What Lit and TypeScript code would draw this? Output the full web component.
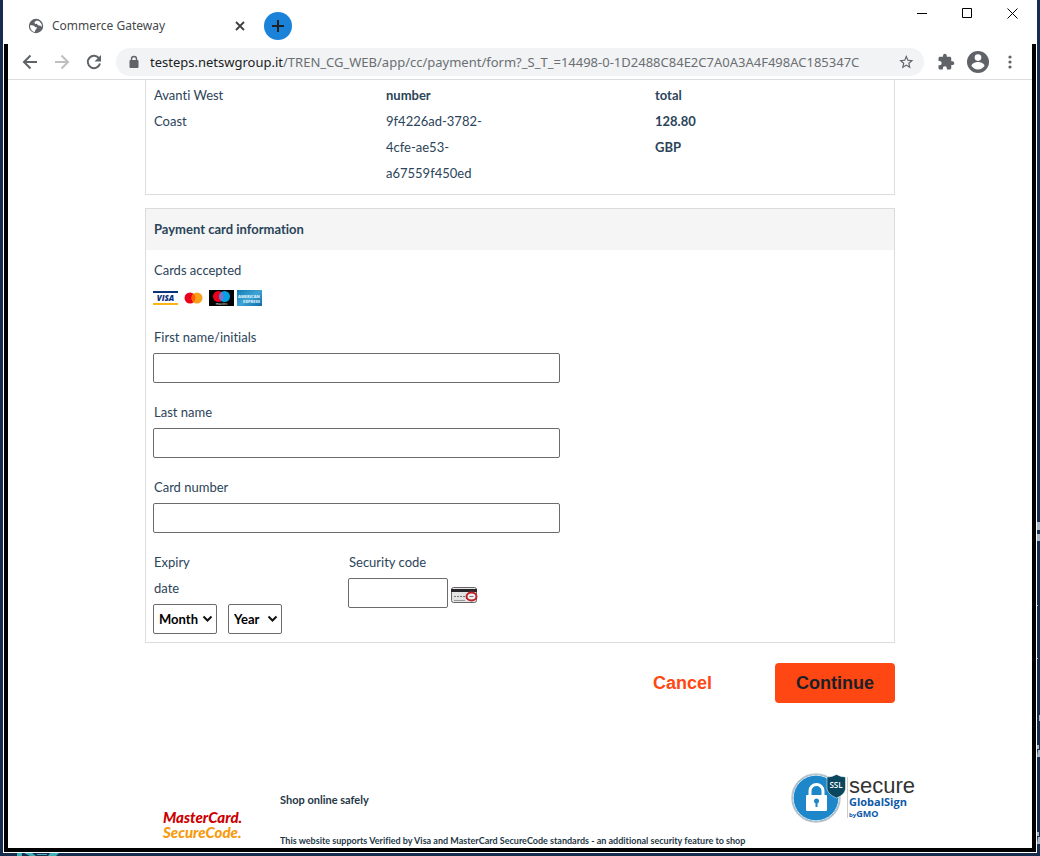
import { LitElement, html, css, svg } from "lit";
import { customElement } from "lit/decorators.js";

@customElement("browser-bar")
class BrowserBar extends LitElement {
  static styles = css`
    :host { display: block; }
    button { border: 0; background: none; padding: 0; display: grid; place-items: center; color: #5f6368; }
    svg { display: block; }
    .bar { display: flex; align-items: center; height: 35px; padding: 0 12px 0 14px; border-bottom: 1px solid #dadce0; font: 13px/20px "Noto Sans", sans-serif; }
    .nav { display: flex; gap: 16px; }
    .nav button { width: 16px; height: 16px; }
    .nav .off { color: #bdbfc1; }
    .address { flex: 1; min-width: 0; display: flex; align-items: center; height: 28px; margin: 0 12px 0 14px; padding: 0 10px 0 11px; border-radius: 14px; background: #f1f3f4; color: #5f6368; }
    .url { flex: 1; min-width: 0; margin: 0 16px 0 9px; overflow: hidden; white-space: nowrap; color: #6b6f73; }
    .host { color: #202124; }
    .tools { display: flex; align-items: center; }
    .tools button { width: 20px; height: 24px; }
    .tools .user { width: 24px; margin: 0 10px; }
  `;
  render() {
    return html`<div class="bar">
      <div class="nav">
        <button aria-label="Back"><svg width="16" height="16" viewBox="0 0 16 16" fill="none" stroke="currentColor" stroke-width="2"><path d="M15 8H2.500M8.500 1.500L2 8l6.500 6.500"/></svg></button>
        <button class="off" aria-label="Forward"><svg width="16" height="16" viewBox="0 0 16 16" fill="none" stroke="currentColor" stroke-width="2"><path d="M1 8h12.500M7.500 1.500L14 8l-6.500 6.500"/></svg></button>
        <button aria-label="Reload"><svg width="16" height="16" viewBox="0 0 16 16"><path d="M13.200 4.500A6.200 6.200 0 1 0 14 9.600" fill="none" stroke="currentColor" stroke-width="2"/><path d="M15 1v6.500H8.500z" fill="currentColor"/></svg></button>
      </div>
      <div class="address">
        <svg width="14" height="14" viewBox="0 0 14 14"><rect x="2.500" y="5" width="9" height="8" rx="1" fill="currentColor"/><path d="M4.500 5.500V4a2.500 2.500 0 0 1 5 0v1.500" fill="none" stroke="currentColor" stroke-width="1.400"/></svg>
        <div class="url"><span class="host">testeps.netswgroup.it</span>/TREN_CG_WEB/app/cc/payment/form?_S_T_=14498-0-1D2488C84E2C7A0A3A4F498AC185347C</div>
        <button aria-label="Bookmark"><svg width="16" height="16" viewBox="0 0 24 24"><path fill="currentColor" d="M23 9.200l-7.600-.7L12.400 1.500 9.500 8.500 1.800 9.200l5.800 5.100-1.700 7.500 6.500-4 6.500 4-1.700-7.500zM12.400 15.600l-3.900 2.300 1-4.400L6.100 10.500l4.500-.4 1.800-4.200 1.800 4.200 4.500.4-3.400 3 1 4.400z"/></svg></button>
      </div>
      <div class="tools">
        <button aria-label="Extensions"><svg width="18" height="18" viewBox="0 0 24 24"><path fill="currentColor" d="M20.500 11H19V7c0-1.100-.9-2-2-2h-4V3.500a2.500 2.500 0 0 0-5 0V5H4c-1.100 0-2 .9-2 2v3.800h1.500a2.700 2.700 0 0 1 0 5.400H2V20c0 1.100.9 2 2 2h3.800v-1.500a2.700 2.700 0 0 1 5.400 0V22H17c1.100 0 2-.9 2-2v-4h1.500a2.500 2.500 0 0 0 0-5z"/></svg></button>
        <button class="user" aria-label="Profile"><svg width="22" height="22" viewBox="0 0 22 22"><circle cx="11" cy="11" r="11" fill="currentColor"/><circle cx="11" cy="6.600" r="3.300" fill="#fff"/><path d="M4.500 15c0-2.700 4.300-4 6.500-4s6.500 1.300 6.500 4c-1.400 2-3.800 3.400-6.500 3.400S5.900 17 4.500 15z" fill="#fff"/></svg></button>
        <button aria-label="Menu"><svg width="16" height="16" viewBox="0 0 16 16" fill="currentColor"><circle cx="8" cy="3" r="1.600"/><circle cx="8" cy="8" r="1.600"/><circle cx="8" cy="13" r="1.600"/></svg></button>
      </div>
    </div>`;
  }
}

@customElement("payment-page")
class PaymentPage extends LitElement {
  static styles = css`
    :host { display: block; color: #2b4459; font: 13px/26px Lato, sans-serif; font-variant-ligatures: none; }
    * { box-sizing: border-box; }
    .page { max-width: 750px; margin: 0 auto; }
    .panel { border: 1px solid #dcdcdc; }
    .summary { display: grid; grid-template-columns: 232px 269px 1fr; border-top: 0; padding: 2px 8px 8px; }
    strong { font-weight: 700; }
    .card { margin-top: 13px; padding-bottom: 8px; }
    h2 { margin: 0; height: 41px; padding: 0 8px; font-size: 13px; line-height: 41px; font-weight: 700; background: #f5f5f5; }
    .body { padding: 7px 7px 0; }
    .body p { margin: 0; padding-left: 1px; }
    label { display: block; padding-left: 1px; }
    .brands { display: flex; gap: 3px; margin: 7px 0 18px; }
    svg { display: block; }
    input, select { display: block; height: 30px; border: 1px solid #6b6b6b; border-radius: 2px; background: #fff; font: inherit; padding: 0 4px; }
    .field { margin-bottom: 16px; }
    .field input { width: 407px; max-width: 100%; margin-top: 3px; }
    .row { display: grid; grid-template-columns: 195px 1fr; }
    .caption { width: 60px; }
    .selects { display: flex; gap: 11px; margin-top: 3px; }
    select { appearance: none; width: 64px; color: #000; font-weight: 700; padding: 0 5px; }
    .pick { display: grid; }
    .pick > * { grid-area: 1 / 1; }
    .pick svg { align-self: center; justify-self: end; margin-right: 4px; pointer-events: none; }
    .year { width: 54px; }
    .code { display: flex; align-items: center; gap: 3px; margin-top: 3px; }
    .code input { width: 100px; }
    .code svg { margin-top: 4px; }
    .actions { display: flex; justify-content: flex-end; gap: 42px; margin-top: 20px; }
    .actions button { height: 40px; border: 0; border-radius: 4px; font: 700 18px/24px "Liberation Sans", Arial, sans-serif; background: none; color: #ff4713; padding: 0 21px; }
    .actions .go { background: #ff4713; color: #1b1f26; width: 120px; padding: 0; }
    .foot { display: flex; align-items: flex-start; margin: 70px -20px 0 18px; color: #243746; font-weight: 700; }
    .mc { width: 117px; padding-top: 37px; font: italic 900 15px/15px Lato, sans-serif; color: #c00; }
    .mc span { display: block; color: #f79a0e; }
    .safe { flex: 1; min-width: 0; white-space: nowrap; font-size: 11px; line-height: 16px; padding-top: 19px; }
    .safe p { margin: 0 0 25px; }
    .safe small { display: block; font-size: 9px; }
    .seal { display: flex; }
    .words { margin: 4px 0 0 1px; border-left: 1px solid #ccc; padding-left: 1px; height: 41px; font: 22px/18px "Liberation Sans", Arial, sans-serif; color: #333; }
    .words b { display: block; font: 700 11px/14px "Open Sans", sans-serif; color: #0d59a8; }
    .words i { display: block; font: 700 9px/9px "Open Sans", sans-serif; color: #0d59a8; }
    .words small { font-size: 6px; }
  `;
  private chevron = svg`<path d="M1.500 1.500l4 4 4-4" fill="none" stroke="#111" stroke-width="2"/>`;
  render() {
    return html`<main class="page">
      <section class="panel summary">
        <div>Avanti West<br>Coast</div>
        <div><strong>number</strong><br>9f4226ad-3782-<br>4cfe-ae53-<br>a67559f450ed</div>
        <div><strong>total<br>128.80<br>GBP</strong></div>
      </section>
      <section class="panel card">
        <h2>Payment card information</h2>
        <div class="body">
          <p>Cards accepted</p>
          <div class="brands">
            <svg width="25" height="16" role="img" aria-label="Visa"><path fill="#fff" d="M0 0h25v16H0z"/><path fill="#0c337b" d="M0 1h25v2H0z"/><path fill="#fdb515" d="M0 13h25v2H0z"/><text x="12.500" y="11" text-anchor="middle" font-family="Open Sans" font-size="8" font-weight="800" font-style="italic" fill="#0c337b">VISA</text></svg>
            <svg width="25" height="16" role="img" aria-label="Mastercard"><circle cx="9" cy="8" r="5.500" fill="#eb001b"/><circle cx="16" cy="8" r="5.500" fill="#f9a01b"/><path d="M12.500 3.800a5.500 5.500 0 0 1 0 8.400 5.500 5.500 0 0 1 0-8.400z" fill="#ff5f00"/></svg>
            <svg width="25" height="16" role="img" aria-label="Maestro"><path d="M0 0h25v16H0z"/><circle cx="9.500" cy="6.500" r="5.500" fill="#eb001b"/><circle cx="15.500" cy="6.500" r="5.500" fill="#00a2e5"/><path d="M12.500 2a5.500 5.500 0 0 1 0 9 5.500 5.500 0 0 1 0-9z" fill="#7375cf"/><text x="12.500" y="15" text-anchor="middle" font-family="Open Sans" font-size="3" fill="#fff">maestro</text></svg>
            <svg width="25" height="16" role="img" aria-label="American Express"><defs><linearGradient id="ax" x2="1" y2="1"><stop stop-color="#0f7ab5"/><stop offset=".5" stop-color="#3fa4d5"/><stop offset="1" stop-color="#0b6aa8"/></linearGradient></defs><path fill="url(#ax)" d="M0 0h25v16H0z"/><g font-family="Open Sans" font-size="4" font-weight="800" fill="#d5eefa"><text x="1" y="8">AMERICAN</text><text x="6" y="13">EXPRESS</text></g></svg>
          </div>
          <div class="field"><label for="first">First name/initials</label><input id="first"></div>
          <div class="field"><label for="last">Last name</label><input id="last"></div>
          <div class="field"><label for="number">Card number</label><input id="number"></div>
          <div class="row">
            <div>
              <label class="caption" for="month">Expiry<br>date</label>
              <div class="selects">
                <div class="pick"><select id="month"><option>Month</option></select><svg width="11" height="8">${this.chevron}</svg></div>
                <div class="pick"><select class="year" aria-label="Expiry year"><option>Year</option></select><svg width="11" height="8">${this.chevron}</svg></div>
              </div>
            </div>
            <div>
              <label for="cvv">Security code</label>
              <div class="code"><input id="cvv">
                <svg width="27" height="16" viewBox="0 0 27 16"><rect x=".5" y=".5" width="25" height="15" rx="2" fill="#e4e3e3" stroke="#6b6467"/><path d="M0 2h26v3H0z" fill="#29262b"/><path d="M3 9.500h13" stroke="#777" stroke-dasharray="2 1"/><path d="M3 13.500h11" stroke="#999"/><ellipse cx="20.500" cy="9.500" rx="5" ry="4" fill="#eee" stroke="#bd2029" stroke-width="2"/><path d="M18.500 9.500h4" stroke="#777"/></svg>
              </div>
            </div>
          </div>
        </div>
      </section>
      <div class="actions"><button>Cancel</button><button class="go">Continue</button></div>
      <footer class="foot">
        <div class="mc">MasterCard.<span>SecureCode.</span></div>
        <div class="safe"><p>Shop online safely</p><small>This website supports Verified by Visa and MasterCard SecureCode standards - an additional security feature to shop</small></div>
        <div class="seal">
          <svg width="55" height="50"><circle cx="25" cy="25" r="24" fill="#1e87c9" stroke="#bfc3c6" stroke-width="1.500"/><circle cx="25" cy="25" r="22.800" fill="none" stroke="#fff" stroke-width=".8"/><path d="M19 24v-6a6.500 6.500 0 0 1 13 0v6" fill="none" stroke="#fff" stroke-width="3"/><rect x="15" y="22" width="21" height="16" rx="1" fill="#fff"/><circle cx="25.500" cy="28" r="2.500" fill="#1e87c9"/><path d="M24.500 28h2v6h-2z" fill="#1e87c9"/><path d="M36 4q5 0 9.500-2.500Q50 4 54.500 4v12q-1 6-9 9-8-3-9.500-9z" fill="#0a475f" stroke="#fff" stroke-width=".5"/><text x="45" y="15" text-anchor="middle" font-family="Open Sans" font-size="8" font-weight="600" fill="#fff">SSL</text></svg>
          <div class="words">secure<b>GlobalSign</b><i><small>by</small>GMO</i></div>
        </div>
      </footer>
    </main>`;
  }
}

@customElement("app-root")
class AppRoot extends LitElement {
  static styles = css`
    :host { display: block; height: 100vh; background: #172d4d; overflow: hidden; }
    * { box-sizing: border-box; }
    .desk { position: relative; height: 100%; padding: 0 3px 3px; overflow: hidden; }
    .scraps { position: absolute; right: 0; bottom: 0; }
    .teal { position: absolute; left: 17px; bottom: 0; }
    .window { position: relative; display: flex; flex-direction: column; height: 100%; padding: 0 1px 1px; background: #fff; }
    .title { flex: none; height: 44px; display: flex; padding: 0 18px 0 24px; font: 12px/16px "Noto Sans", sans-serif; color: #45494d; }
    .tab { display: flex; align-items: center; width: 217px; padding-top: 8px; gap: 8px; }
    .tab span { flex: 1; }
    button { border: 0; background: none; padding: 0; display: grid; place-items: center; }
    svg { display: block; }
    .plus { width: 28px; height: 28px; border-radius: 50%; background: #1a82d9; margin: 12px 0 0 19px; }
    .controls { display: flex; gap: 34px; margin-left: auto; height: 26px; }
    .frame { flex: 1; min-height: 0; border: 4px solid #000; border-top: 0; overflow: hidden; }
  `;
  render() {
    return html`<div class="desk">
      <svg class="scraps" width="3" height="376" fill="#a9b7c8"><path d="M0 42h3v8H0zM0 54h3v7H0zM0 125h1v1H0zM0 178h1v1H0zM2 235h1v6H2zM0 265h2v4H0zM1 270h2v7H0zM0 352h2v4H0zM1 357h2v7H0z"/></svg>
      <svg class="teal" width="42" height="3"><path d="M0 0h5v3H0zM7 0h8l4 3h-6zM20 1h10v1H20zM33 0h9l-3 3h-8z" fill="#3fb0b8"/></svg>
      <div class="window">
        <header class="title">
          <div class="tab">
            <svg width="16" height="16" viewBox="0 0 16 16"><circle cx="8" cy="8" r="7.200" fill="#5f6368"/><path d="M2 7.500c2.500-.7 4.500.3 5 1.500l2 .5c0 1.500-2 1.500-2 4.500-3 0-5-3.500-5-6.500zM8.500 2.500C7.500 3.500 6 4 6.500 5s2 .2 2.500 1 1 1.500 2.500 1.500S13 9 14 8.500c0-3-2.500-6-5.500-6z" fill="#fff"/></svg>
            <span>Commerce Gateway</span>
            <button aria-label="Close tab"><svg width="10" height="10" stroke="#3c4043" stroke-width="1.800"><path d="M1 1l8 8M9 1L1 9"/></svg></button>
          </div>
          <button class="plus" aria-label="New tab"><svg width="12" height="12" stroke="#202124" stroke-width="2"><path d="M6 0v12M0 6h12"/></svg></button>
          <div class="controls">
            <button aria-label="Minimize"><svg width="11" height="11" stroke="#000"><path d="M0 5.500h10"/></svg></button>
            <button aria-label="Maximize"><svg width="11" height="11" fill="none" stroke="#000"><path d="M.5.5h9v9h-9z"/></svg></button>
            <button aria-label="Close"><svg width="11" height="11" stroke="#000"><path d="M.5.5l10 10M10.500.5l-10 10"/></svg></button>
          </div>
        </header>
        <div class="frame"><browser-bar></browser-bar><payment-page></payment-page></div>
      </div>
    </div>`;
  }
}
